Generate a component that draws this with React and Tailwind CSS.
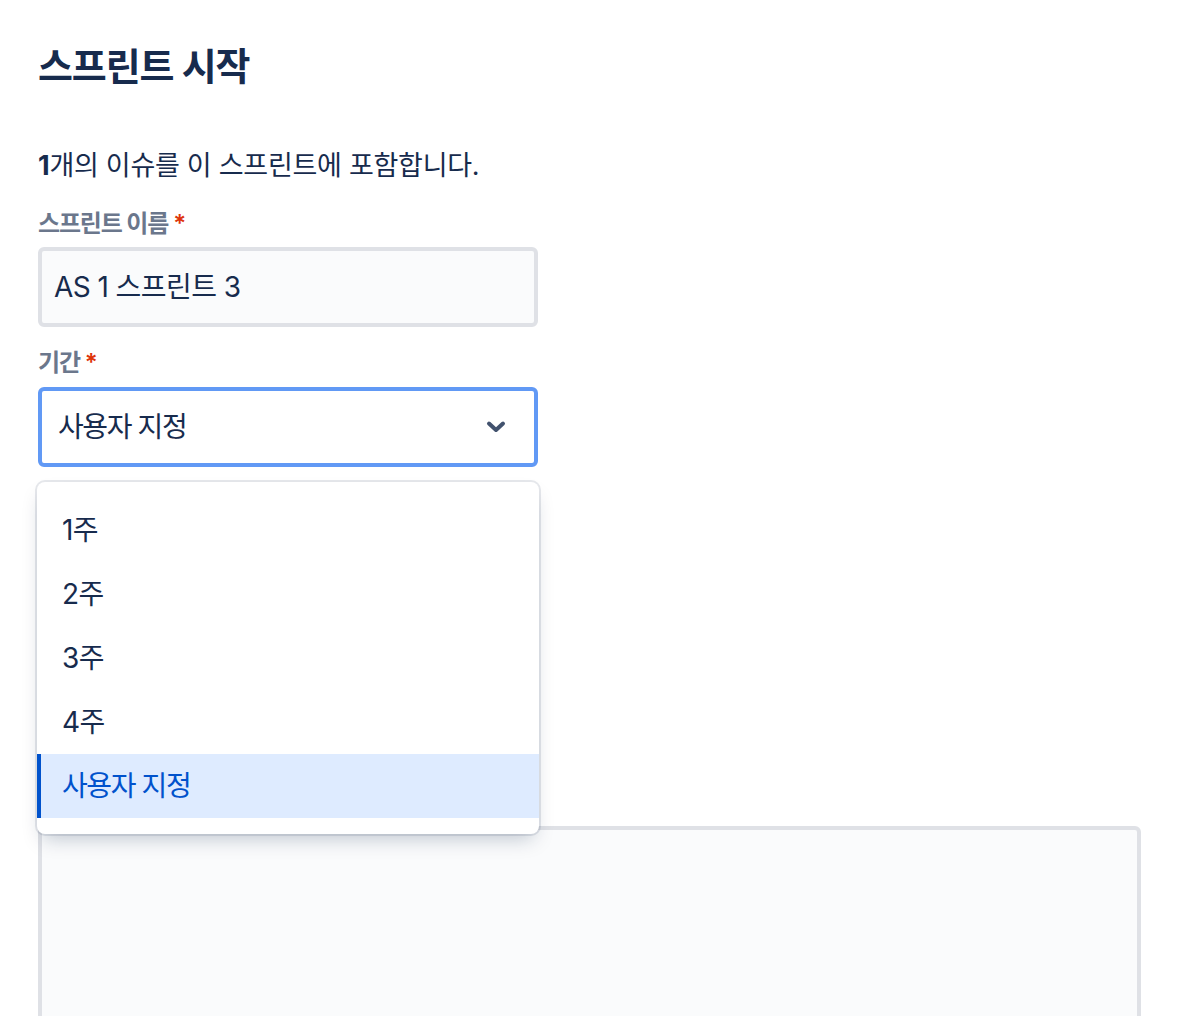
import { useState } from "react";

const options = ["1주", "2주", "3주", "4주", "사용자 지정"];

function Label({ children }) {
  return (
    <div className="text-[24px] leading-[32px] font-semibold tracking-[-0.05em] text-[#6B778C]">
      {children}
      <span className="ml-[5px] text-[#DE350B]">*</span>
    </div>
  );
}

export default function App() {
  const [selected, setSelected] = useState("사용자 지정");

  return (
    <div
      className="min-h-screen bg-white text-[#172B4D] pl-[38px] pt-[40px]"
      style={{ fontFamily: "Inter, 'Noto Sans CJK KR', sans-serif" }}
    >
      <div className="w-[1103px]">
        <h1 className="text-[38px] leading-[52px] font-semibold tracking-[-0.03em]">스프린트 시작</h1>

        <p className="mt-[54px] text-[27px] leading-[40px] tracking-[-0.01em]">
          <span className="font-bold">1</span>개의 이슈를 이 스프린트에 포함합니다.
        </p>

        <div className="mt-[22px]">
          <Label>스프린트 이름</Label>
          <div className="mt-[7px] w-[500px] h-[80px] rounded-[6px] border-[4px] border-[#DFE1E6] bg-[#FAFBFC] flex items-center px-[12px] text-[28px] tracking-[-0.02em]">
            AS 1 스프린트 3
          </div>
        </div>

        <div className="mt-[20px]">
          <Label>기간</Label>
          <div className="relative mt-[8px] w-[500px]">
            <div className="h-[80px] rounded-[6px] border-[4px] border-[#6199F5] bg-white flex items-center justify-between pl-[16px] pr-[28px] text-[28px] tracking-[-0.05em]">
              <span>{selected}</span>
              <svg width="20" height="14" viewBox="0 0 20 14" fill="none">
                <path
                  d="M3 3.5 L10 10 L17 3.5"
                  stroke="#42526E"
                  strokeWidth="4"
                  strokeLinecap="round"
                  strokeLinejoin="round"
                />
              </svg>
            </div>

            <div className="absolute z-10 left-[-1px] top-[95px] w-[502px] rounded-[8px] bg-white py-[16px] shadow-[0_10px_20px_-6px_rgba(9,30,66,0.25),0_0_0_2px_rgba(9,30,66,0.1)]">
              {options.map((o) => (
                <div
                  key={o}
                  onClick={() => setSelected(o)}
                  className={
                    o === selected
                      ? "h-[64px] flex items-center pl-[21px] border-l-[4px] border-[#0052CC] bg-[#DEEBFF] text-[#0052CC] text-[28px] tracking-[-0.05em] cursor-pointer"
                      : "h-[64px] flex items-center pl-[25px] text-[28px] tracking-[-0.02em] cursor-pointer"
                  }
                >
                  {o}
                </div>
              ))}
            </div>
          </div>
        </div>

        <div className="mt-[359px] h-[300px] rounded-[6px] border-[4px] border-[#DFE1E6] bg-[#FAFBFC]" />
      </div>
    </div>
  );
}
